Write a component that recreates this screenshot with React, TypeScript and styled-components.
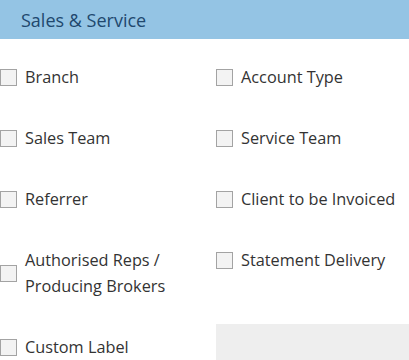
import React from "react";
import styled, { createGlobalStyle } from "styled-components";

const Global = createGlobalStyle`
  html, body { margin: 0; padding: 0; background: #fff; overflow: hidden; }
  body { font-family: "Open Sans", "Noto Sans", sans-serif; }
`;

const Panel = styled.div`
  width: 409px;
  height: 360px;
  overflow: hidden;
`;

const Header = styled.div`
  height: 39px;
  background: #94c4e4;
  display: flex;
  align-items: center;
  padding-left: 21px;
  padding-top: 1px;
  box-sizing: border-box;
  color: #21486e;
  font-size: 18px;
`;

const Grid = styled.div`
  display: grid;
  grid-template-columns: 216px 216px;
  row-gap: 15px;
  padding-top: 15px;
`;

const Cell = styled.div<{ $empty?: boolean }>`
  padding: 10px 0;
  min-height: 26px;
  display: flex;
  align-items: ${(p) => (p.$empty ? "stretch" : "flex-start")};
  background: ${(p) => (p.$empty ? "#eeeeee" : "transparent")};
`;

const Item = styled.label`
  display: flex;
  align-items: center;
  gap: 8px;
  color: #333;
  font-size: 16.3px;
  line-height: 26px;
`;

const Box = styled.span`
  flex: none;
  width: 15px;
  height: 15px;
  border: 1px solid #a3a3a3;
  background: #f3f3f3;
`;

const Label = styled.span``;

const items: (string[] | null)[] = [
  ["Branch"],
  ["Account Type"],
  ["Sales Team"],
  ["Service Team"],
  ["Referrer"],
  ["Client to be Invoiced"],
  ["Authorised Reps /", "Producing Brokers"],
  ["Statement Delivery"],
  ["Custom Label"],
  null,
];

export default function App() {
  return (
    <Panel>
      <Global />
      <Header>Sales &amp; Service</Header>
      <Grid>
        {items.map((it, i) =>
          it ? (
            <Cell key={i}>
              <Item>
                <Box />
                <Label>
                  {it.map((l, j) => (
                    <React.Fragment key={j}>
                      {j > 0 && <br />}
                      {l}
                    </React.Fragment>
                  ))}
                </Label>
              </Item>
            </Cell>
          ) : (
            <Cell key={i} $empty />
          )
        )}
      </Grid>
    </Panel>
  );
}
